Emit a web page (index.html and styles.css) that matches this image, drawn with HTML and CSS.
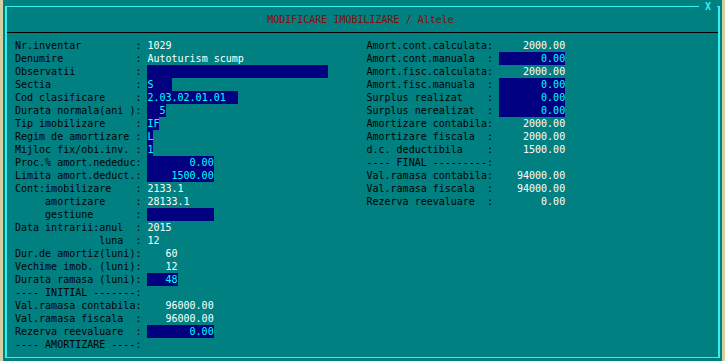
FILE: index.html
```html
<!DOCTYPE html>
<html lang="ro">
<head>
  <meta charset="UTF-8">
  <title>Modificare imobilizare</title>
  <link rel="stylesheet" href="styles.css">
</head>
<body>
  <div class="screen">
    <div class="frame">
      <span class="close">X</span>
      <div class="title">MODIFICARE IMOBILIZARE / Altele</div>
      <div class="rule"></div>

      <div class="panel">
        <!-- coloana stanga -->
        <div class="col">
          <div class="row"><span class="lbl">Nr.inventar         : </span><span class="val">1029</span></div>
          <div class="row"><span class="lbl">Denumire            : </span><span class="val">Autoturism scump</span></div>
          <div class="row"><span class="lbl">Observatii          : </span><span class="fld w30"></span></div>
          <div class="row"><span class="lbl">Sectia              : </span><span class="fld w4">S</span></div>
          <div class="row"><span class="lbl">Cod clasificare     : </span><span class="fld w15">2.03.02.01.01</span></div>
          <div class="row"><span class="lbl">Durata normala(ani ): </span><span class="fld w3 r">5</span></div>
          <div class="row"><span class="lbl">Tip imobilizare     : </span><span class="fld w2">IF</span></div>
          <div class="row"><span class="lbl">Regim de amortizare : </span><span class="fld w1">L</span></div>
          <div class="row"><span class="lbl">Mijloc fix/obi.inv. : </span><span class="fld w1">1</span></div>
          <div class="row"><span class="lbl">Proc.% amort.nededuc: </span><span class="fld w11 r">0.00</span></div>
          <div class="row"><span class="lbl">Limita amort.deduct.: </span><span class="fld w11 r">1500.00</span></div>
          <div class="row"><span class="lbl">Cont:imobilizare    : </span><span class="val">2133.1</span></div>
          <div class="row"><span class="lbl">     amortizare     : </span><span class="val">28133.1</span></div>
          <div class="row"><span class="lbl">     gestiune       : </span><span class="fld w11"></span></div>
          <div class="row"><span class="lbl">Data intrarii:anul  : </span><span class="val">2015</span></div>
          <div class="row"><span class="lbl">              luna  : </span><span class="val">12</span></div>
          <div class="row"><span class="lbl">Dur.de amortiz(luni): </span><span class="val num w5">60</span></div>
          <div class="row"><span class="lbl">Vechime imob. (luni): </span><span class="val num w5">12</span></div>
          <div class="row"><span class="lbl">Durata ramasa (luni): </span><span class="fld w5 r">48</span></div>
          <div class="row"><span class="lbl">---- INITIAL -------:</span></div>
          <div class="row"><span class="lbl">Val.ramasa contabila: </span><span class="val num w11">96000.00</span></div>
          <div class="row"><span class="lbl">Val.ramasa fiscala  : </span><span class="val num w11">96000.00</span></div>
          <div class="row"><span class="lbl">Rezerva reevaluare  : </span><span class="fld w11 r">0.00</span></div>
          <div class="row"><span class="lbl">---- AMORTIZARE ----:</span></div>
        </div>

        <!-- coloana dreapta -->
        <div class="col">
          <div class="row"><span class="lbl">Amort.cont.calculata: </span><span class="val num w11">2000.00</span></div>
          <div class="row"><span class="lbl">Amort.cont.manuala  : </span><span class="fld w11 r">0.00</span></div>
          <div class="row"><span class="lbl">Amort.fisc.calculata: </span><span class="val num w11">2000.00</span></div>
          <div class="row"><span class="lbl">Amort.fisc.manuala  : </span><span class="fld w11 r">0.00</span></div>
          <div class="row"><span class="lbl">Surplus realizat    : </span><span class="fld w11 r">0.00</span></div>
          <div class="row"><span class="lbl">Surplus nerealizat  : </span><span class="fld w11 r">0.00</span></div>
          <div class="row"><span class="lbl">Amortizare contabila: </span><span class="val num w11">2000.00</span></div>
          <div class="row"><span class="lbl">Amortizare fiscala  : </span><span class="val num w11">2000.00</span></div>
          <div class="row"><span class="lbl">d.c. deductibila    : </span><span class="val num w11">1500.00</span></div>
          <div class="row"><span class="lbl">---- FINAL ---------:</span></div>
          <div class="row"><span class="lbl">Val.ramasa contabila: </span><span class="val num w11">94000.00</span></div>
          <div class="row"><span class="lbl">Val.ramasa fiscala  : </span><span class="val num w11">94000.00</span></div>
          <div class="row"><span class="lbl">Rezerva reevaluare  : </span><span class="val num w11">0.00</span></div>
        </div>
      </div>
    </div>
  </div>
</body>
</html>
```

FILE: styles.css
```css
body {
  margin: 0;
  background-color: #d3d1a3; /* fundalul desktop-ului */
  font-family: "DejaVu Sans Mono", "Liberation Mono", monospace;
  font-size: 10px;
  line-height: 13px;
}

.screen {
  box-sizing: border-box;
  width: 719px;
  height: 361px;
  margin-left: 3px;
  padding: 6px 0 0 2px;
  background-color: #008080;
}

.frame {
  position: relative;
  box-sizing: border-box;
  width: 715px;
  height: 352px;
  border: solid #33f0f0;
  border-width: 1px 2px;
}

/* butonul de inchidere peste chenar */
.close {
  position: absolute;
  top: -5px;
  right: 1px;
  width: 18px;
  height: 9px;
  line-height: 9px;
  text-align: center;
  font-weight: bold;
  color: #33f0f0;
  background-color: #008080;
}

.title {
  margin-top: 6px;
  padding-right: 4px;
  height: 13px;
  text-align: center;
  color: #8c0a0a;
}

.rule {
  margin-top: 6px;
  height: 1px;
  background-color: #000;
}

.panel {
  display: flex;
  padding: 6px 0 0 8px;
}

.col {
  width: 354px;
}

.row {
  height: 13px;
  white-space: pre;
}

.lbl {
  color: #000;
}

.val {
  color: #fff;
}

.num {
  display: inline-block;
  text-align: right;
}

/* campuri editabile */
.fld {
  display: inline-block;
  vertical-align: top;
  height: 13px;
  background-color: #000080;
  color: #00ffff;
}

.r { text-align: right; }

.w1 { width: 1ch; }
.w2 { width: 2ch; }
.w3 { width: 3ch; }
.w4 { width: 4ch; }
.w5 { width: 5ch; }
.w11 { width: 11ch; }
.w15 { width: 15ch; }
.w30 { width: 30ch; }
```
